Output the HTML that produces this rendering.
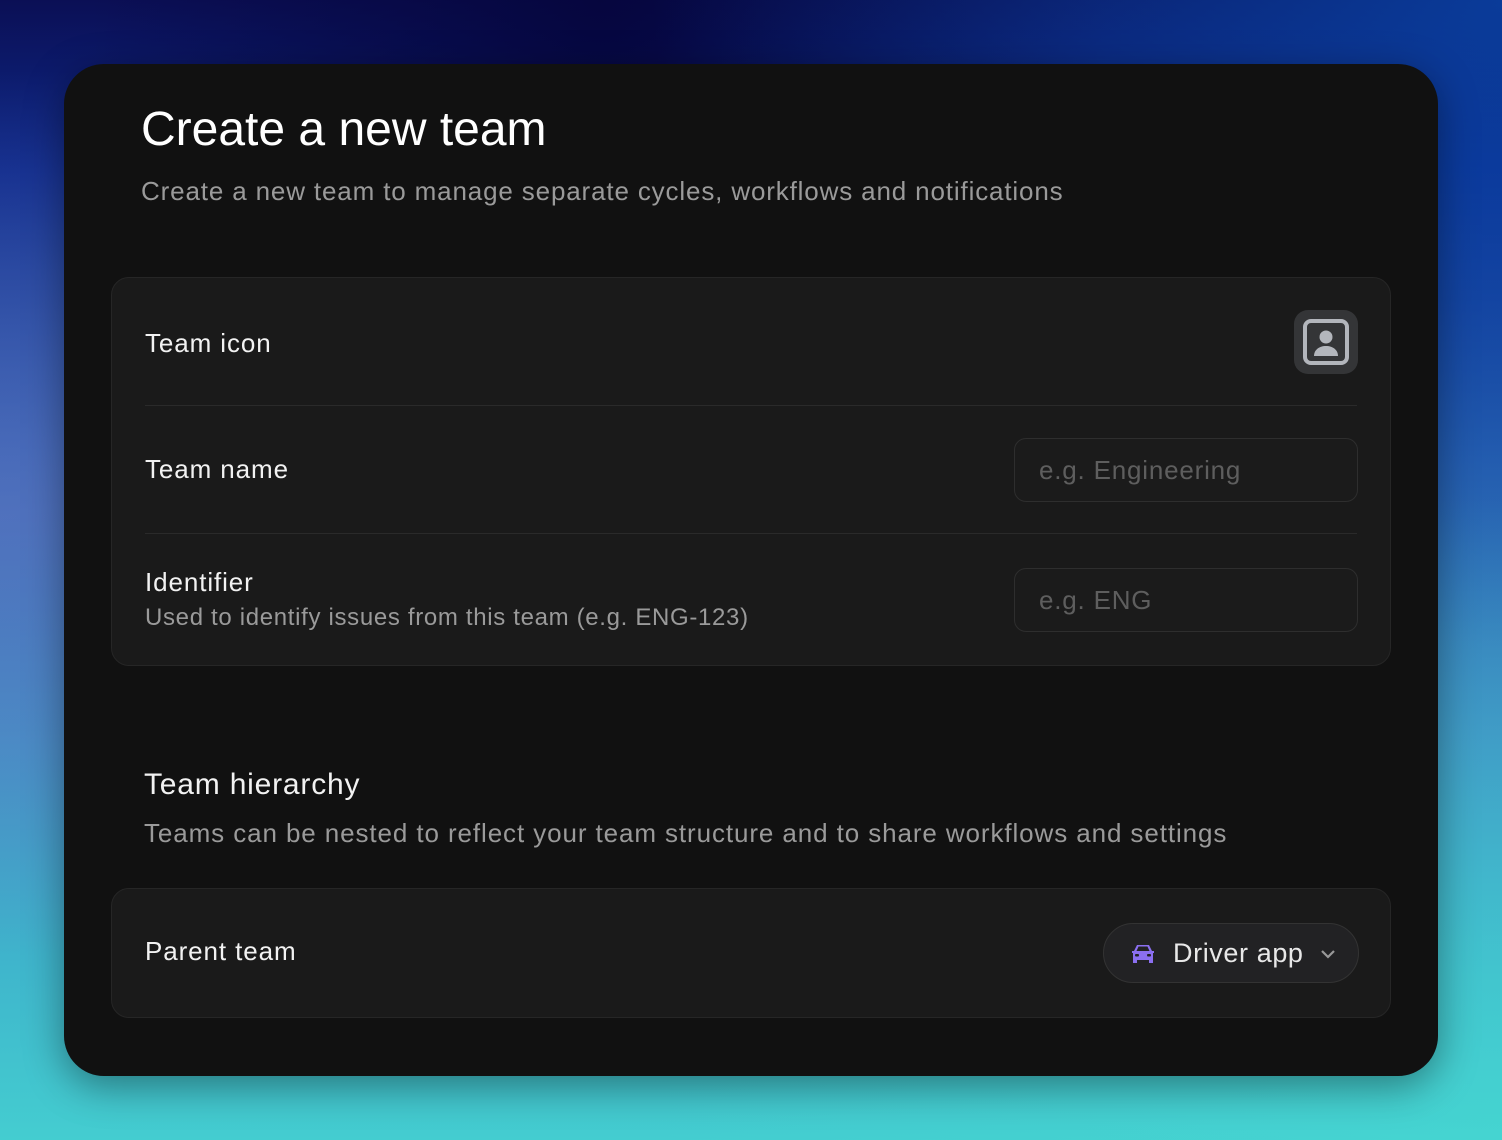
<!DOCTYPE html>
<html><head><style>
*{margin:0;padding:0;box-sizing:border-box}
body{width:1502px;height:1140px;overflow:hidden;font-family:"Liberation Sans",sans-serif;position:relative;
background:linear-gradient(180deg,#0b0f55 0%,#0d2a8a 15%,#2a62b0 40%,#3f8fc4 65%,#3fb6cc 85%,#44cdd0 100%);}
.bg2{position:absolute;inset:0;background:radial-gradient(ellipse at 0% 45%,rgba(120,120,200,.45),transparent 50%),radial-gradient(ellipse at 100% 100%,rgba(70,220,210,.5),transparent 40%),radial-gradient(ellipse at 100% 0%,rgba(10,70,170,.8),transparent 40%),radial-gradient(ellipse at 40% 0%,rgba(5,5,60,.9),transparent 40%)}
.card{position:absolute;left:64px;top:64px;width:1374px;height:1012px;background:#111111;border-radius:40px;box-shadow:0 10px 40px rgba(0,0,0,.4)}
h1{position:absolute;left:141px;top:102px;font-size:48px;font-weight:400;color:#fff;letter-spacing:0px}
.sub{position:absolute;left:141px;top:176px;font-size:26px;color:#9a9a9a;letter-spacing:0.85px}
.panel{position:absolute;left:111px;width:1280px;background:#1a1a1a;border:1px solid #262626;border-radius:18px}
.lbl{position:absolute;left:33px;font-size:26px;color:#f2f2f2;letter-spacing:0.9px}
.hr{position:absolute;left:33px;right:33px;height:1px;background:#2a2a2a}
.inp{position:absolute;left:902px;width:344px;height:64px;border:1px solid #2e2e2e;border-radius:12px;background:#1b1b1b;color:#5e5e5e;font-size:26px;padding:16px 24px;letter-spacing:0.8px}
.desc{position:absolute;left:33px;font-size:24px;color:#9a9a9a;letter-spacing:0.67px}
</style></head><body><div class="bg2"></div>
<div class="card"></div>
<h1>Create a new team</h1>
<div class="sub">Create a new team to manage separate cycles, workflows and notifications</div>
<div class="panel" style="top:277px;height:389px">
<div class="lbl" style="top:50px">Team icon</div>
<div style="position:absolute;left:1182px;top:32px;width:64px;height:64px;border-radius:14px;background:#343537">
<svg width="64" height="64" viewBox="0 0 64 64"><rect x="11" y="11" width="42" height="42" rx="6" fill="none" stroke="#b3b6bc" stroke-width="4"/><circle cx="32" cy="27" r="6.5" fill="#b3b6bc"/><path d="M20 46c0-6 5-10 12-10s12 4 12 10z" fill="#b3b6bc"/></svg></div>
<div class="hr" style="top:127px"></div>
<div class="lbl" style="top:176px">Team name</div>
<div class="inp" style="top:160px">e.g. Engineering</div>
<div class="hr" style="top:255px"></div>
<div class="lbl" style="top:289px">Identifier</div>
<div class="desc" style="top:326px">Used to identify issues from this team (e.g. ENG-123)</div>
<div class="inp" style="top:290px">e.g. ENG</div>
</div>
<div style="position:absolute;left:144px;top:768px;font-size:30px;color:#f2f2f2;letter-spacing:0.8px">Team hierarchy</div>
<div style="position:absolute;left:144px;top:818px;font-size:26px;color:#9a9a9a;letter-spacing:0.9px">Teams can be nested to reflect your team structure and to share workflows and settings</div>
<div class="panel" style="top:888px;height:130px">
<div class="lbl" style="top:47px">Parent team</div>
<div style="position:absolute;left:991px;top:34px;width:256px;height:60px;border:1px solid #333;border-radius:30px;background:#222224">
<svg style="position:absolute;left:26px;top:18px" width="26" height="24" viewBox="0 0 26 24"><path d="M4 9l3-6h12l3 6h2v2h-1v10h-4v-3H7v3H3V11H2V9z" fill="#8b6ff0"/><rect x="5" y="12" width="4" height="2.5" rx="1" fill="#222224"/><rect x="17" y="12" width="4" height="2.5" rx="1" fill="#222224"/><path d="M8.5 4.5h9l2 4.5h-13z" fill="#222224"/></svg>
<div style="position:absolute;left:69px;top:14px;font-size:27px;color:#e8e8e8;letter-spacing:0.6px">Driver app</div>
<svg style="position:absolute;left:216px;top:24px" width="16" height="12" viewBox="0 0 16 12"><path d="M2 3l6 6 6-6" fill="none" stroke="#999" stroke-width="2.2"/></svg>
</div></div>
</body></html>
